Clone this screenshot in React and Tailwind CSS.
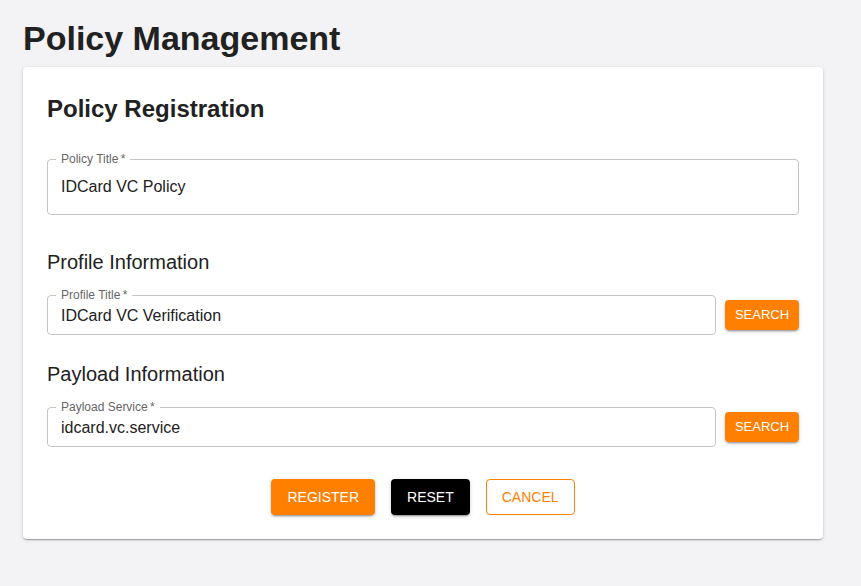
import React from "react";

const font = { fontFamily: '"Liberation Sans", Arial, Helvetica, sans-serif' };

function Field({ label, value, tall }) {
  return (
    <div
      className={`relative flex-1 rounded-[4px] border border-[#c4c4c4] flex items-center pl-[13px] ${
        tall ? "h-[56px] pb-[1px]" : "h-[40px]"
      }`}
    >
      <span className="absolute left-[8px] top-[-9px] bg-white px-[5px] text-[12px] leading-[16px] text-[#666666]">
        {label}
        {"\u2009*"}
      </span>
      <span className="text-[16px] leading-[23px] text-[#212121]">{value}</span>
    </div>
  );
}

function SearchBtn() {
  return (
    <button className="h-[30px] w-[74px] shrink-0 rounded-[4px] bg-[#ff7f00] text-[13px] text-white shadow-[0_3px_1px_-2px_rgba(0,0,0,0.2),0_2px_2px_0_rgba(0,0,0,0.14),0_1px_5px_0_rgba(0,0,0,0.12)]">
      SEARCH
    </button>
  );
}

export default function App() {
  return (
    <div className="min-h-screen bg-[#f3f3f5] pl-[23px] pt-[17px]" style={font}>
      <h1 className="text-[34px] leading-[42px] font-bold text-[#212121]">Policy Management</h1>
      <div className="mt-[8px] w-[800px] rounded-[4px] bg-white px-[24px] pt-[26px] pb-[24px] shadow-[0_2px_1px_-1px_rgba(0,0,0,0.2),0_1px_2px_0_rgba(0,0,0,0.14),0_1px_4px_0_rgba(0,0,0,0.12)]">
        <h2 className="text-[24px] leading-[32px] font-bold text-[#212121]">Policy Registration</h2>
        <div className="mt-[34px] flex">
          <Field label="Policy Title" value="IDCard VC Policy" tall />
        </div>

        <h3 className="mt-[35px] text-[20px] leading-[24px] text-[#212121]">Profile Information</h3>
        <div className="mt-[21px] flex items-center gap-[9px]">
          <Field label="Profile Title" value="IDCard VC Verification" />
          <SearchBtn />
        </div>

        <h3 className="mt-[27px] text-[20px] leading-[24px] text-[#212121]">Payload Information</h3>
        <div className="mt-[21px] flex items-center gap-[9px]">
          <Field label="Payload Service" value="idcard.vc.service" />
          <SearchBtn />
        </div>

        <div className="mt-[32px] flex justify-center gap-[16px]">
          <button className="h-[36px] rounded-[4px] bg-[#ff7f00] px-[16px] text-[14px] text-white shadow-[0_3px_1px_-2px_rgba(0,0,0,0.2),0_2px_2px_0_rgba(0,0,0,0.14),0_1px_5px_0_rgba(0,0,0,0.12)]">
            REGISTER
          </button>
          <button className="h-[36px] rounded-[4px] bg-black px-[16px] text-[14px] text-white shadow-[0_3px_1px_-2px_rgba(0,0,0,0.2),0_2px_2px_0_rgba(0,0,0,0.14),0_1px_5px_0_rgba(0,0,0,0.12)]">
            RESET
          </button>
          <button className="h-[36px] rounded-[4px] border border-[#ff7f00] bg-white px-[15px] text-[14px] text-[#ff7f00]">
            CANCEL
          </button>
        </div>
      </div>
    </div>
  );
}
